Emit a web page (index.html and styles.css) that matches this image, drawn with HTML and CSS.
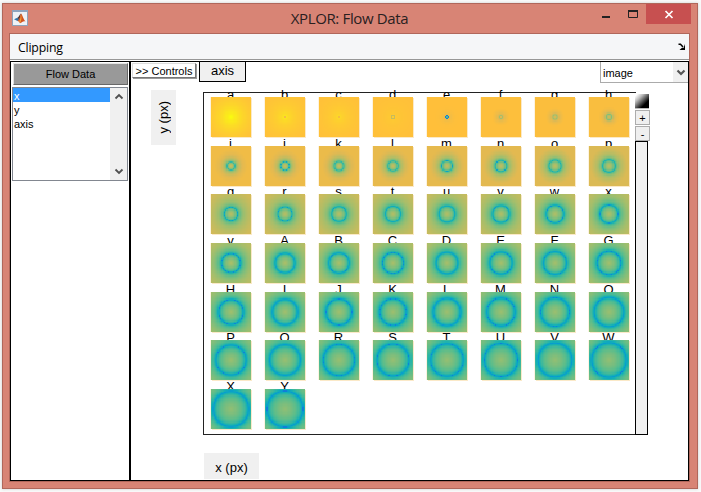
FILE: index.html
```html
<!DOCTYPE html>
<html lang="en">
<head>
<meta charset="utf-8">
<title>XPLOR: Flow Data</title>
<link rel="stylesheet" href="styles.css">
</head>
<body>
<div class="window">
  <header class="titlebar">
    <svg class="app-icon" width="16" height="16" viewBox="0 0 16 16">
      <rect x=".5" y=".5" width="15" height="15" fill="#eef2f7" stroke="#8fa3ba"/>
      <rect x="1" y="0" width="15" height="2" fill="#8da4c0"/>
      <path d="M2 9.2 5.4 7.7 7.5 10 5.5 11Z" fill="#2f72a8"/>
      <path d="M5.4 7.7C7 7 7.4 4.5 9 3.5L7.5 10Z" fill="#473438"/>
      <path d="M9 3.5C10.5 4.5 11.3 9.5 13.5 11.5 11 10.7 10 12.5 8 13.3 7.5 12 6.6 11 5.5 11 7.5 9.5 8 6 9 3.5Z" fill="#d35420"/>
      <path d="M9 4.5C9.8 7 9.6 10.5 8 13.2L7.2 11.2C8.4 9.4 8.7 7 9 4.5Z" fill="#f2a33b"/>
    </svg>
    <h1 class="title">XPLOR: Flow Data</h1>
    <div class="controls">
      <svg class="ctl" width="27" height="20" viewBox="0 0 27 20"><path d="M10 12h8v2h-8z" fill="#222"/></svg>
      <svg class="ctl" width="27" height="20" viewBox="0 0 27 20"><path d="M9.5 6v7.5h9V6" fill="none" stroke="#222"/><path d="M9 6h10v2H9z" fill="#222"/></svg>
      <svg class="ctl close" width="45" height="20" viewBox="0 0 45 20"><path d="M19.5 7 26.5 14M26.5 7 19.5 14" stroke="#fff" stroke-width="1.7"/></svg>
    </div>
  </header>
  <div class="client">
    <nav class="menubar"><span class="menu">Clipping</span>
      <svg width="8" height="8" viewBox="0 0 8 8"><path d="M.5 1.2H2.5L5 4" fill="none" stroke="#000" stroke-width="1.5"/><path d="M7 1v6H1.5L4 4.8 5.5 5Z" fill="#000"/></svg>
    </nav>
    <div class="panels">
      <aside class="sidebar">
        <button class="flow">Flow Data</button>
        <div class="listbox">
          <ul><li class="selected">x</li><li>y</li><li>axis</li></ul>
          <div class="scroll">
            <svg width="10" height="7" viewBox="0 0 10 7"><path d="M1.5 5.5 5 2 8.5 5.5" fill="none" stroke="#505050" stroke-width="1.8"/></svg>
            <svg width="10" height="7" viewBox="0 0 10 7"><path d="M1.5 1.5 5 5 8.5 1.5" fill="none" stroke="#505050" stroke-width="1.8"/></svg>
          </div>
        </div>
      </aside>
      <main class="main">
        <div class="toolbar">
          <button class="toggle">&gt;&gt; Controls</button>
          <div class="tab">axis</div>
          <div class="select"><span>image</span>
            <div class="drop"><svg width="10" height="8" viewBox="0 0 10 8"><path d="M1.5 1.5 5 5 8.5 1.5" fill="none" stroke="#555" stroke-width="2.2"/></svg></div>
          </div>
        </div>
        <div class="view">
          <div class="ylabel"><span>y (px)</span></div>
          <div class="plot" id="plot"></div>
          <div class="side">
            <div class="ramp"></div>
            <button class="mini">+</button>
            <button class="mini">-</button>
            <div class="slider"></div>
          </div>
        </div>
        <div class="xlabel">x (px)</div>
      </main>
    </div>
  </div>
</div>
<script src="plot.js"></script>
</body>
</html>
```
FILE: styles.css
```css
* { box-sizing: border-box; }
body { margin: 0; padding: 3px 3px 4px 2px; background: #fafafa; width: 701px; height: 492px; overflow: hidden; font-family: "Liberation Sans", Arial, sans-serif; font-size: 11px; color: #000; }
.window { width: 696px; height: 486px; background: #d88475; border: 1px solid #b0675b; box-shadow: 0 0 3px #ccc; padding: 0 7px 7px 6px; }
.titlebar { height: 29px; display: flex; justify-content: space-between; align-items: flex-start; position: relative; }
.app-icon { margin: 6px 0 0 3px; }
.title { margin: 0; position: absolute; left: 0; right: 0; top: 4px; text-align: center; font: 15px/21px "Open Sans", "Noto Sans", sans-serif; letter-spacing: -.35px; color: #29201f; }
.controls { display: flex; margin-right: -1px; position: relative; }
.ctl { display: block; }
.close { background: #c75050; }
.client { height: 449px; border: 1px solid #b0675b; background: #fff; }
.menubar { height: 26px; background: #f5f6f8; border-bottom: 1px solid #979797; display: flex; justify-content: space-between; align-items: center; padding: 0 3px 0 8px; font: 12.3px "Open Sans", "Noto Sans", sans-serif; letter-spacing: -.2px; }
.menu { padding-top: 2px; }
.panels { margin-top: 1px; height: 420px; border: solid #000; border-width: 1px 1px 1px 0; display: flex; }
.sidebar { width: 121px; border: solid #000; border-width: 0 2px 0 1px; padding: 1px 1px 0; flex: none; }
button { font-family: inherit; font-size: 11px; padding: 0; margin: 0; display: block; color: #000; }
.flow { margin-left: 1px; width: 115px; height: 22px; background: #999; border: 1px solid; border-color: #e3e3e3 #686868 #686868 #e3e3e3; }
.listbox { margin-top: 2px; width: 116px; height: 94px; border: 1px solid #828790; display: flex; }
.listbox ul { flex: 1; list-style: none; padding: 0; margin: 0; }
.listbox li { height: 14px; line-height: 17px; padding-left: 1px; }
.listbox .selected { background: #39f; color: #fff; }
.scroll { width: 17px; background: #f0f0f0; display: flex; flex-direction: column; justify-content: space-between; align-items: center; padding: 5px 0; }
.main { flex: 1; min-width: 0; }
.toolbar { height: 21px; display: flex; align-items: flex-start; }
.toggle { margin: 1px 0 0 1px; width: 64px; height: 15px; background: #fff; border: 1px solid; border-color: #ddd #777 #777 #ddd; box-shadow: 1px 1px #999; }
.tab { margin-left: 3px; width: 47px; height: 20px; border: solid #000; border-width: 0 1px 1px 1px; background: #f0f0f0; font-size: 13px; line-height: 17px; text-align: center; }
.select { margin-left: auto; width: 88px; height: 21px; border: solid #ababab; border-width: 0 0 1px 1px; display: flex; justify-content: space-between; padding-left: 2px; line-height: 22px; }
.drop { width: 15px; background: #f0f0f0; display: flex; align-items: center; justify-content: center; padding-top: 2px; }
.view { height: 352px; display: flex; padding: 9px 0 0 20px; }
.ylabel { margin-top: -2px; width: 25px; height: 55px; background: #f0f0f0; display: flex; align-items: center; justify-content: center; font-size: 13px; }
.ylabel span { writing-mode: vertical-rl; transform: rotate(180deg); }
.plot { margin: 0 0 0 27px; width: 433px; height: 343px; border: solid #222; border-width: 1px 0 1px 1px; display: grid; grid-template-columns: repeat(8, 54px); grid-template-rows: repeat(7, 48.7px); padding: 4px 0 0 7px; }
.tile { position: relative; width: 41px; height: 41px; }
.tile span { position: absolute; left: -6px; right: -4px; top: -10px; line-height: 15px; font-size: 13px; text-align: center; }
.tile canvas { position: relative; z-index: 1; display: block; width: 40px; height: 40px; image-rendering: pixelated; box-shadow: 1px 1px #fbe9c8, -1px 0 #fdf3e0; }
.side { width: 16px; margin-left: -1px; padding-top: 2px; position: relative; z-index: 2; display: flex; flex-direction: column; align-items: flex-start; }
.ramp { width: 14px; height: 15px; background: linear-gradient(135deg, #fff 8%, #bbb 30%, #000 72%); border: solid #bbb; border-width: 0 0 1px; }
.mini { width: 15px; height: 15px; line-height: 12px; margin: 1px 0 0; border: 1px solid #acacac; background: #efefef; }
.slider { width: 13px; flex: 1; margin-top: 0; border: 1px solid #000; background: #f0f0f0; }
.xlabel { margin: 18px 0 0 73px; width: 55px; height: 26px; background: #f0f0f0; font-size: 13px; line-height: 29px; text-align: center; }
```
FILE: plot.js
```js
// Grid of field maps, one per data slice, coloured with a blue-green-yellow scale.
const names = "abcdefghijklmnopqrstuvwxyABCDEFGHIJKLMNOPQRSTUVWXY".split("");
const scale = ["352a87", "0f5cdd", "127dd8", "079ccf", "15b1b4", "59bd8c", "a5be6b", "e1b952", "ffbf3a", "fbe51f", "f9fb0e"]
  .map(h => [0, 2, 4].map(k => parseInt(h.substr(k, 2), 16)));

function mix(points, x) {
  for (let k = 1; k < points.length; k++) {
    if (x <= points[k][0]) {
      const [x0, y0] = points[k - 1], [x1, y1] = points[k];
      return y0 + (y1 - y0) * (x - x0) / (x1 - x0);
    }
  }
  return points[points.length - 1][1];
}
function colour(v) {
  v = Math.max(0, Math.min(1, v)) * 10;
  const k = Math.min(9, Math.floor(v));
  return scale[k].map((c, j) => c + (scale[k + 1][j] - c) * (v - k));
}

const N = 31, C = 15;
const edge = [[0, .8], [4, .8], [7, .78], [8, .75], [15, .69], [16, .675], [24, .63], [32, .59], [40, .56], [49, .53]];
const core = [[0, .78], [7, .66], [16, .62], [32, .59], [49, .57]];
const ring = [[4, .62], [7, .54], [8, .42], [16, .37], [24, .32], [32, .29], [49, .27]];

function value(i, r) {
  if (i < 4) {
    const peak = [1.02, .92, .88, .84][i];
    if (i === 3 && r > .5 && r < 1.6) return .66;
    if ((i === 1 || i === 2) && r < .5) return .77;
    return .8 + (peak - .8) * Math.max(0, 1 - Math.log(1 + r) / 3.2);
  }
  if (i === 4) return r < .5 ? .5 : r < 1.2 ? .2 : .8 - .18 * Math.exp(-r / 2);
  const R = i < 8 ? 1 + (i - 5) * .55 : (1 + .355 * i) / 1.31;
  const d = Math.max(.04, Math.abs(r - R));
  const low = mix(ring, i) - (d < .06 && i > 8 ? .08 : 0);
  const inside = r < R;
  const far = inside ? R : i < 8 ? 6 : i < 16 ? 10 : 20.5 - R;
  const top = mix(inside ? core : edge, i);
  const s = .3;
  return low + (top - low) * Math.min(1, Math.log(1 + d / s) / Math.log(1 + far / s));
}

const plot = document.getElementById("plot");
names.forEach((name, i) => {
  const tile = document.createElement("div");
  tile.className = "tile";
  const label = document.createElement("span");
  label.textContent = name;
  const canvas = document.createElement("canvas");
  canvas.width = canvas.height = N;
  const ctx = canvas.getContext("2d");
  const img = ctx.createImageData(N, N);
  for (let y = 0; y < N; y++) for (let x = 0; x < N; x++) {
    const c = colour(value(i, Math.hypot(x - C, y - C)));
    img.data.set([c[0], c[1], c[2], 255], (y * N + x) * 4);
  }
  ctx.putImageData(img, 0, 0);
  tile.append(label, canvas);
  plot.append(tile);
});
```
